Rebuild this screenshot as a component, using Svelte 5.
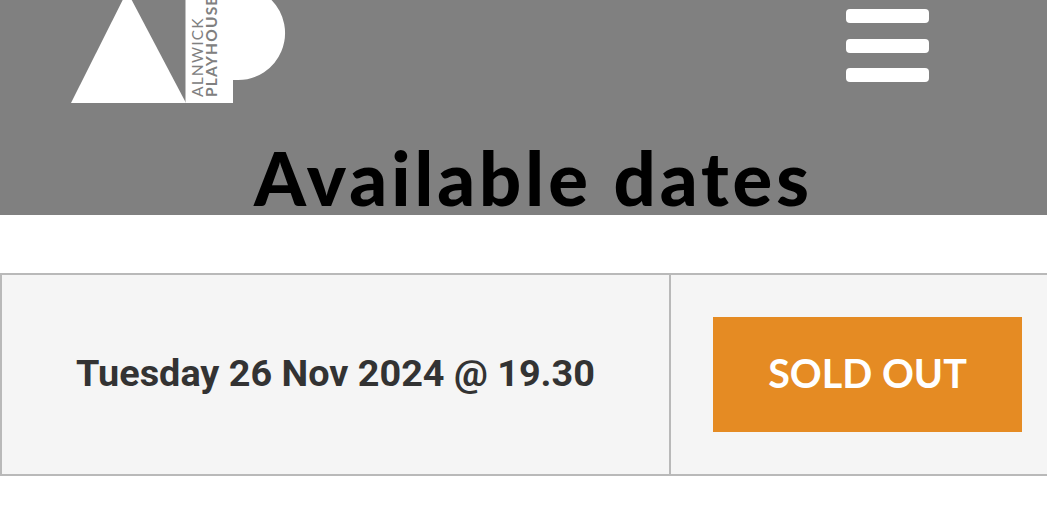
<script lang="ts">
  const dates = [{ label: 'Tuesday 26 Nov 2024 @ 19.30', status: 'SOLD OUT' }];
</script>

<div class="page">
  <header class="site-header">
    <div class="nav">
      <svg class="logo" viewBox="71 0 215 104" width="215" height="104" aria-label="Alnwick Playhouse">
        <polygon points="71,103 186,103 131.7,0 122.7,0" fill="#fff" />
        <path d="M185.5 0 V103 H233 V80 H238 A47 47 0 0 0 271.5 0 Z" fill="#fff" />
        <text class="logo-a" transform="translate(203 97) rotate(-90)">ALNWICK</text>
        <text class="logo-b" transform="translate(216.5 97) rotate(-90)">PLAYHOUSE</text>
      </svg>
      <button class="burger" aria-label="Menu">
        <span></span>
        <span></span>
        <span></span>
      </button>
    </div>
    <h1>Available dates</h1>
  </header>

  {#each dates as d}
    <div class="row">
      <div class="when">{d.label}</div>
      <div class="action">
        <button class="status">{d.status}</button>
      </div>
    </div>
  {/each}
</div>

<style>
  :global(body) {
    margin: 0;
    background: #fff;
    overflow: hidden;
  }
  .page {
    width: 1047px;
    height: 515px;
    overflow: hidden;
  }
  .site-header {
    background: #808080;
    height: 215px;
    overflow: hidden;
  }
  .nav {
    display: flex;
    justify-content: space-between;
    align-items: flex-start;
    height: 104px;
    padding: 0 118px 0 71px;
  }
  .logo {
    display: block;
  }
  .logo-a {
    font: 400 15.5px "Lato", sans-serif;
    letter-spacing: 1.2px;
    fill: #808080;
  }
  .logo-b {
    font: 700 15.5px "Lato", sans-serif;
    letter-spacing: 1.2px;
    fill: #808080;
  }
  .burger {
    display: flex;
    flex-direction: column;
    gap: 15.5px;
    width: 83px;
    margin: 9px 0 0;
    padding: 0;
    border: 0;
    background: none;
  }
  .burger span {
    display: block;
    height: 14px;
    background: #fff;
    border-radius: 4px;
  }
  h1 {
    margin: 37px 0 0;
    padding-left: 20px;
    font: 900 74px/74px "Lato", sans-serif;
    letter-spacing: 4px;
    color: #000;
    text-align: center;
    white-space: nowrap;
  }
  .row {
    display: grid;
    grid-template-columns: 671px 1fr;
    margin-top: 58px;
    background: #f5f5f5;
    border-top: 2px solid #b9b9b9;
    border-bottom: 2px solid #b9b9b9;
  }
  .when {
    display: flex;
    align-items: center;
    justify-content: center;
    padding-bottom: 3px;
    border-left: 2px solid #b9b9b9;
    border-right: 2px solid #b9b9b9;
    font: 700 37.8px "Roboto", sans-serif;
    color: #333;
    white-space: nowrap;
  }
  .action {
    padding: 42px 25px 42px 42px;
  }
  .status {
    display: block;
    width: 100%;
    height: 115px;
    padding: 0 0 4px;
    border: 0;
    background: #e58b23;
    color: #fff;
    font: 700 39.5px "Lato", sans-serif;
  }
</style>
